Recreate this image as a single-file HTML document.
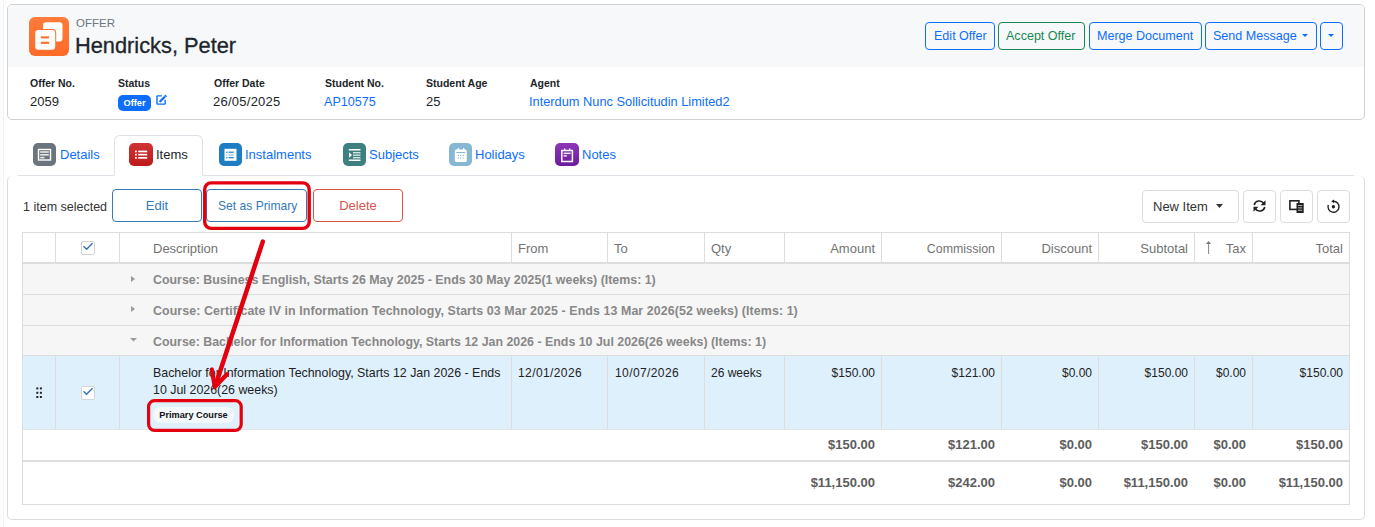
<!DOCTYPE html>
<html><head><meta charset="utf-8">
<style>
*{box-sizing:border-box;margin:0;padding:0}
html,body{width:1375px;height:527px;overflow:hidden;background:#fff;font-family:"Liberation Sans",sans-serif;color:#212529}
.a{position:absolute;white-space:nowrap}
svg{position:absolute;overflow:visible}
.edge{left:0;top:0;width:4px;height:527px;background:#fcfcfd;border-right:1px solid #f3f3f5}
#hcard{left:7px;top:4px;width:1358px;height:116px;border:1px solid #cfd1d3;border-radius:5px;overflow:hidden;background:#fff}
#htop{left:0;top:0;width:1356px;height:62px;background:#f7f8fa}
.hsub{left:76px;top:17px;font-size:11.5px;color:#6c757d}
.hname{left:75px;top:33px;font-size:21.8px;color:#212529;-webkit-text-stroke:0.3px #212529}
.btn{position:absolute;top:22px;height:28px;border:1px solid #0d6efd;border-radius:4px;color:#0d6efd;font-size:12.55px;line-height:26px;white-space:nowrap}
.lbl{position:absolute;top:77px;font-size:10.5px;font-weight:bold;color:#212529;white-space:nowrap}
.val{position:absolute;top:94px;font-size:13px;color:#212529;white-space:nowrap}
.lnk{color:#0d6efd}
.badge{position:absolute;left:118px;top:95px;width:33px;height:16px;border-radius:5px;background:#0d6efd;color:#fff;font-size:9.2px;font-weight:bold;text-align:center;line-height:16px}
.tabline{left:18px;top:175px;width:1336px;height:1px;background:#dee2e6}
.tab{position:absolute;top:135px;height:41px}
.tab.act{border:1px solid #dee2e6;border-bottom:1px solid #fff;border-radius:6px 6px 0 0;background:#fff}
.tt{position:absolute;top:147px;font-size:13px;white-space:nowrap;color:#0d6efd}
#icard{left:7px;top:176px;width:1358px;height:344px;border:1px solid #dcdcdc;border-top-width:0;border-radius:5px}
.tb{position:absolute;top:189px;height:33px;border:1px solid #337ab7;border-radius:4px;color:#337ab7;font-size:13px;line-height:31px;background:#fff;white-space:nowrap}
.gb{position:absolute;top:190px;height:33px;border:1px solid #ddd;border-radius:4px;background:#fff}
#tbl{left:22px;top:232px;width:1328px;height:273px;border:1px solid #ddd}
.vl{position:absolute;width:1px;background:#ddd}
.hl{position:absolute;left:23px;width:1326px;height:1px;background:#ddd}
.th{position:absolute;top:241px;font-size:13px;color:#737373;white-space:nowrap}
.gr{position:absolute;left:23px;width:1326px;background:#f6f6f6}
.gt{position:absolute;left:153px;font-size:12.4px;font-weight:bold;color:#888;white-space:nowrap;margin-top:1px}
.td{position:absolute;top:366px;font-size:12px;color:#222;white-space:nowrap}
.tr{text-align:right}
.sm{position:absolute;font-size:13px;font-weight:bold;color:#5c5c5c;white-space:nowrap;text-align:right}
</style></head><body>
<div class="a edge"></div>
<div id="hcard" class="a"><div id="htop" class="a"></div></div>
<svg style="left:29px;top:17px" width="40" height="39" viewBox="0 0 40 39">
<defs><linearGradient id="og" x1="0" y1="0" x2="0" y2="1"><stop offset="0" stop-color="#ff7b3c"/><stop offset="1" stop-color="#ff6a28"/></linearGradient></defs>
<rect x="0" y="0" width="40" height="39" rx="6" fill="url(#og)"/>
<rect x="14" y="5.3" width="19.5" height="19.2" rx="3" fill="#fff"/>
<rect x="5.2" y="12.1" width="22" height="21.7" rx="4" fill="#ff7132"/>
<rect x="6.2" y="13.1" width="20" height="19.7" rx="3" fill="#fff"/>
<rect x="11.8" y="19.3" width="8.3" height="2.1" fill="#ff6f30"/>
<rect x="11.8" y="24.7" width="8.3" height="2.2" fill="#ff6f30"/>
</svg>
<div class="a hsub">OFFER</div>
<div class="a hname">Hendricks, Peter</div>
<div class="btn" style="left:925px;width:70px;padding-left:8px">Edit Offer</div>
<div class="btn" style="left:998px;width:87px;padding-left:7px;border-color:#198754;color:#198754">Accept Offer</div>
<div class="btn" style="left:1089px;width:113px;padding-left:7px">Merge Document</div>
<div class="btn" style="left:1205px;width:112px;padding-left:7px">Send Message</div>
<svg style="left:1302px;top:34px" width="6" height="3" viewBox="0 0 6 3"><path d="M0 0H6L3 3Z" fill="#0d6efd"/></svg>
<div class="btn" style="left:1320px;width:23px"></div>
<svg style="left:1328px;top:34px" width="6" height="3" viewBox="0 0 6 3"><path d="M0 0H6L3 3Z" fill="#0d6efd"/></svg>
<div class="lbl" style="left:30px">Offer No.</div>
<div class="val" style="left:30px">2059</div>
<div class="lbl" style="left:214px">Offer Date</div>
<div class="val" style="left:213px;letter-spacing:0.25px">26/05/2025</div>
<div class="lbl" style="left:325px">Student No.</div>
<div class="val lnk" style="left:324px;top:95px;font-size:12.6px">AP10575</div>
<div class="lbl" style="left:426px">Student Age</div>
<div class="val" style="left:426px">25</div>
<div class="lbl" style="left:530px">Agent</div>
<div class="val lnk" style="left:529px;font-size:12.8px">Interdum Nunc Sollicitudin Limited2</div>
<div class="lbl" style="left:118px">Status</div>
<div class="badge">Offer</div>
<svg style="left:156px;top:94px" width="11" height="11" viewBox="0 0 11 11">
<path d="M5.9 1.9H1.5Q1 1.9 1 2.4V9.6Q1 10.1 1.5 10.1H8.7Q9.2 10.1 9.2 9.6V5.8" fill="none" stroke="#0d6efd" stroke-width="1.4"/>
<path d="M4.3 7.2L8.3 3.2" fill="none" stroke="#0d6efd" stroke-width="2.3" stroke-linecap="round"/>
<path d="M9.1 2.4L10.2 1.3" fill="none" stroke="#0d6efd" stroke-width="2.4"/>
</svg>
<div class="a tabline"></div>
<div class="tab act" style="left:114px;width:89px"></div>
<svg style="left:33px;top:143px" width="23" height="23" viewBox="0 0 23 23">
<rect width="23" height="23" rx="5" fill="#6c757d"/>
<rect x="5.5" y="6.5" width="12" height="10.5" fill="none" stroke="#fff" stroke-width="1.4"/>
<rect x="7.2" y="8.2" width="8.6" height="1.6" fill="#e6e8ea"/>
<rect x="7.2" y="11" width="8.6" height="1.6" fill="#e6e8ea"/>
<rect x="7.2" y="13.8" width="4.2" height="1.6" fill="#e6e8ea"/>
</svg>
<div class="tt" style="left:60px">Details</div>
<svg style="left:129px;top:143px" width="24" height="23" viewBox="0 0 24 23">
<defs><linearGradient id="rg" x1="0" y1="0" x2="0" y2="1"><stop offset="0" stop-color="#cf3535"/><stop offset="1" stop-color="#bd1a1a"/></linearGradient></defs>
<rect width="24" height="23" rx="5" fill="url(#rg)"/>
<rect x="6" y="7.6" width="1.8" height="1.7" fill="#fff"/><rect x="9.2" y="7.6" width="9" height="1.7" fill="#fff"/>
<rect x="6" y="10.8" width="1.8" height="1.7" fill="#fff"/><rect x="9.2" y="10.8" width="9" height="1.7" fill="#fff"/>
<rect x="6" y="14" width="1.8" height="1.7" fill="#fff"/><rect x="9.2" y="14" width="9" height="1.7" fill="#fff"/>
</svg>
<div class="tt" style="left:156px;color:#212529">Items</div>
<svg style="left:219px;top:143px" width="23" height="23" viewBox="0 0 23 23">
<rect width="23" height="23" rx="5" fill="#1f7dc2"/>
<rect x="5.5" y="5.8" width="12" height="12" fill="#fff"/>
<circle cx="7.9" cy="9.3" r="0.8" fill="#1f7dc2"/><rect x="9.6" y="8.6" width="5.2" height="1.2" fill="#1f7dc2"/>
<circle cx="7.9" cy="12" r="0.8" fill="#8fbfe3"/><rect x="9.6" y="11.4" width="5.2" height="1.2" fill="#8fbfe3"/>
<circle cx="7.9" cy="14.7" r="0.8" fill="#1f7dc2"/><rect x="9.6" y="14.1" width="5.2" height="1.2" fill="#1f7dc2"/>
</svg>
<div class="tt" style="left:245px">Instalments</div>
<svg style="left:343px;top:143px" width="23" height="23" viewBox="0 0 23 23">
<rect width="23" height="23" rx="5" fill="#3e7f80"/>
<rect x="5.8" y="6" width="11.7" height="1.5" fill="#fff"/>
<rect x="10" y="9" width="7.5" height="1.4" fill="#d5e4e4"/>
<rect x="10" y="11.5" width="7.5" height="1.4" fill="#d5e4e4"/>
<rect x="10" y="14" width="7.5" height="1.4" fill="#d5e4e4"/>
<rect x="5.8" y="16.5" width="11.7" height="1.5" fill="#fff"/>
<path d="M6 9.2L9 12L6 14.8Z" fill="#fff"/>
</svg>
<div class="tt" style="left:369px">Subjects</div>
<svg style="left:449px;top:143px" width="23" height="23" viewBox="0 0 23 23">
<rect width="23" height="23" rx="5" fill="#86b8d3"/>
<rect x="5.8" y="6.4" width="12" height="12.5" rx="1.5" fill="#fff"/>
<rect x="8.6" y="5" width="1.3" height="2.5" fill="#fff"/><rect x="14" y="5" width="1.3" height="2.5" fill="#fff"/>
<rect x="7.3" y="9" width="9" height="1" fill="#86b8d3"/>
<g fill="#5fa3c8"><circle cx="9.4" cy="12.3" r="0.6"/><circle cx="11.8" cy="12.3" r="0.6"/><circle cx="14.2" cy="12.3" r="0.6"/><circle cx="9.4" cy="15" r="0.6"/><circle cx="11.8" cy="15" r="0.6"/><circle cx="14.2" cy="15" r="0.6"/></g>
</svg>
<div class="tt" style="left:475px">Holidays</div>
<svg style="left:555px;top:143px" width="24" height="23" viewBox="0 0 24 23">
<defs><linearGradient id="pg" x1="0" y1="0" x2="0" y2="1"><stop offset="0" stop-color="#8c37b8"/><stop offset="1" stop-color="#6d1b9d"/></linearGradient></defs>
<rect width="24" height="23" rx="5" fill="url(#pg)"/>
<rect x="6.8" y="7.5" width="10.6" height="11" fill="none" stroke="#fff" stroke-width="1.5"/>
<rect x="9" y="5.5" width="1.3" height="2.5" fill="#fff"/><rect x="14" y="5.5" width="1.3" height="2.5" fill="#fff"/>
<rect x="8.6" y="9.6" width="7" height="1.5" fill="#f4eaf8"/>
<rect x="8.6" y="12.2" width="3.3" height="1.4" fill="#f4eaf8"/>
</svg>
<div class="tt" style="left:582px">Notes</div>
<div id="icard" class="a"></div>
<div class="a" style="left:23px;top:200px;font-size:12.5px;color:#333">1 item selected</div>
<div class="tb" style="left:112px;width:90px;text-align:center">Edit</div>
<div class="tb" style="left:206px;width:101px;padding-left:11px;font-size:12.1px;line-height:32px">Set as Primary</div>
<div class="tb" style="left:313px;width:90px;text-align:center;border-color:#d9534f;color:#d9534f">Delete</div>
<div class="gb" style="left:1142px;width:97px"></div>
<div class="a" style="left:1153px;top:199px;font-size:13px;color:#333">New Item</div>
<svg style="left:1216px;top:204px" width="7" height="4" viewBox="0 0 7 4"><path d="M0 0H7L3.5 4Z" fill="#333"/></svg>
<div class="gb" style="left:1243px;width:33px"></div>
<div class="gb" style="left:1280px;width:33px"></div>
<div class="gb" style="left:1317px;width:33px"></div>
<svg style="left:1253px;top:200px" width="13" height="12" viewBox="0 0 13 12">
<path d="M1.2 5A5.2 5.2 0 0 1 10.6 3.3" fill="none" stroke="#222" stroke-width="1.6"/>
<path d="M12.5 0.3V5.3H7.5Z" fill="#222"/>
<path d="M11.8 7A5.2 5.2 0 0 1 2.4 8.7" fill="none" stroke="#222" stroke-width="1.6"/>
<path d="M0.5 11.7V6.7H5.5Z" fill="#222"/>
</svg>
<svg style="left:1289px;top:200px" width="15" height="13" viewBox="0 0 15 13">
<rect x="0.9" y="0.8" width="9" height="8.6" fill="none" stroke="#222" stroke-width="1.6"/>
<rect x="7.5" y="3" width="7.2" height="10" fill="#222"/>
<rect x="9" y="5.2" width="4.2" height="0.8" fill="#d8d8d8"/><rect x="9" y="7.5" width="4.2" height="0.8" fill="#d8d8d8"/><rect x="9" y="9.8" width="4.2" height="0.8" fill="#d8d8d8"/>
</svg>
<svg style="left:1327px;top:200px" width="13" height="13" viewBox="0 0 13 13">
<path d="M6.4 1.3A5.5 5.5 0 1 1 1.3 5" fill="none" stroke="#222" stroke-width="1.4"/>
<path d="M4.2 1.3L7 -0.6V3.2Z" fill="#222"/>
<circle cx="6.4" cy="6.7" r="1.7" fill="#222"/>
</svg>
<div id="tbl" class="a"></div>
<div class="vl" style="left:55px;top:233px;height:29px"></div>
<div class="vl" style="left:119px;top:233px;height:29px"></div>
<div class="vl" style="left:511px;top:233px;height:29px"></div>
<div class="vl" style="left:607px;top:233px;height:29px"></div>
<div class="vl" style="left:704px;top:233px;height:29px"></div>
<div class="vl" style="left:784px;top:233px;height:29px"></div>
<div class="vl" style="left:881px;top:233px;height:29px"></div>
<div class="vl" style="left:1001px;top:233px;height:29px"></div>
<div class="vl" style="left:1098px;top:233px;height:29px"></div>
<div class="vl" style="left:1194px;top:233px;height:29px"></div>
<div class="vl" style="left:1252px;top:233px;height:29px"></div>
<div class="hl" style="top:262px;height:2px"></div>
<div class="gr" style="top:264px;height:30px"></div>
<div class="hl" style="top:294px"></div>
<div class="gr" style="top:295px;height:30px"></div>
<div class="hl" style="top:325px"></div>
<div class="gr" style="top:326px;height:29px"></div>
<div class="hl" style="top:355px"></div>
<div class="a" style="left:23px;top:356px;width:1326px;height:73px;background:#dff0fd"></div>
<div class="vl" style="left:55px;top:356px;height:73px"></div>
<div class="vl" style="left:119px;top:356px;height:73px"></div>
<div class="vl" style="left:511px;top:356px;height:73px"></div>
<div class="vl" style="left:607px;top:356px;height:73px"></div>
<div class="vl" style="left:704px;top:356px;height:73px"></div>
<div class="vl" style="left:784px;top:356px;height:73px"></div>
<div class="vl" style="left:881px;top:356px;height:73px"></div>
<div class="vl" style="left:1001px;top:356px;height:73px"></div>
<div class="vl" style="left:1098px;top:356px;height:73px"></div>
<div class="vl" style="left:1194px;top:356px;height:73px"></div>
<div class="vl" style="left:1252px;top:356px;height:73px"></div>
<div class="hl" style="top:429px;background:#e2e4e6"></div>
<div class="hl" style="top:460px;height:2px"></div>
<svg style="left:81px;top:241px" width="14" height="14" viewBox="0 0 14 14">
<rect x="0.5" y="0.5" width="13" height="13" rx="1.5" fill="#fff" stroke="#d4d4d4"/>
<path d="M2.5 5.2L5.6 8.2L11.5 2.3" fill="none" stroke="#2f74bb" stroke-width="1.35"/>
</svg>
<svg style="left:81px;top:386px" width="14" height="14" viewBox="0 0 14 14">
<rect x="0.5" y="0.5" width="13" height="13" rx="1.5" fill="#fff" stroke="#d4d4d4"/>
<path d="M2.5 5.2L5.6 8.2L11.5 2.3" fill="none" stroke="#2f74bb" stroke-width="1.35"/>
</svg>
<div class="th" style="left:153px">Description</div>
<div class="th" style="left:518px">From</div>
<div class="th" style="left:614px">To</div>
<div class="th" style="left:711px">Qty</div>
<div class="th tr" style="right:500px">Amount</div>
<div class="th tr" style="right:380px;font-size:12.4px;margin-top:0.5px">Commission</div>
<div class="th tr" style="right:283px">Discount</div>
<div class="th tr" style="right:187px">Subtotal</div>
<div class="th tr" style="right:129px">Tax</div>
<div class="th tr" style="right:32px">Total</div>
<svg style="left:1205.5px;top:241px" width="5" height="13" viewBox="0 0 5 13"><path d="M2.5 0L5 3H0Z" fill="#777"/><rect x="2.1" y="2.5" width="1" height="10.5" fill="#888"/></svg>
<div class="gt" style="top:272px">Course: Business English, Starts 26 May 2025 - Ends 30 May 2025(1 weeks) (Items: 1)</div>
<div class="gt" style="top:303px;letter-spacing:0.09px">Course: Certificate IV in Information Technology, Starts 03 Mar 2025 - Ends 13 Mar 2026(52 weeks) (Items: 1)</div>
<div class="gt" style="top:334px">Course: Bachelor for Information Technology, Starts 12 Jan 2026 - Ends 10 Jul 2026(26 weeks) (Items: 1)</div>
<svg style="left:131px;top:276px" width="4" height="6" viewBox="0 0 4 6"><path d="M0 0L4 3L0 6Z" fill="#999"/></svg>
<svg style="left:131px;top:306px" width="4" height="6" viewBox="0 0 4 6"><path d="M0 0L4 3L0 6Z" fill="#999"/></svg>
<svg style="left:130px;top:338px" width="7" height="3.5" viewBox="0 0 7 3.5"><path d="M0 0H7L3.5 3.5Z" fill="#999"/></svg>
<svg style="left:36px;top:387px" width="6" height="11" viewBox="0 0 6 11"><g fill="#222"><rect x="0.3" y="0.4" width="2" height="2"/><rect x="3.9" y="0.4" width="2" height="2"/><rect x="0.3" y="4.8" width="2" height="2"/><rect x="3.9" y="4.8" width="2" height="2"/><rect x="0.3" y="9" width="2" height="2"/><rect x="3.9" y="9" width="2" height="2"/></g></svg>
<div class="td" style="left:153px;top:365px;line-height:16.5px;font-size:12.4px">Bachelor for Information Technology, Starts 12 Jan 2026 - Ends<br>10 Jul 2026(26 weeks)</div>
<div class="a" style="left:153px;top:407px;width:81px;height:16px;border-radius:8px;background:#f3f8fc;font-size:9.2px;font-weight:bold;color:#111;text-align:center;line-height:16px">Primary Course</div>
<div class="td" style="left:518px;letter-spacing:0.4px">12/01/2026</div>
<div class="td" style="left:615px;letter-spacing:0.4px">10/07/2026</div>
<div class="td" style="left:711px">26 weeks</div>
<div class="td tr" style="right:500px">$150.00</div>
<div class="td tr" style="right:380px">$121.00</div>
<div class="td tr" style="right:283px">$0.00</div>
<div class="td tr" style="right:187px">$150.00</div>
<div class="td tr" style="right:129px">$0.00</div>
<div class="td tr" style="right:32px">$150.00</div>
<div class="sm" style="top:437px;right:500px">$150.00</div>
<div class="sm" style="top:437px;right:380px">$121.00</div>
<div class="sm" style="top:437px;right:283px">$0.00</div>
<div class="sm" style="top:437px;right:187px">$150.00</div>
<div class="sm" style="top:437px;right:129px">$0.00</div>
<div class="sm" style="top:437px;right:32px">$150.00</div>
<div class="sm" style="top:475px;right:500px">$11,150.00</div>
<div class="sm" style="top:475px;right:380px">$242.00</div>
<div class="sm" style="top:475px;right:283px">$0.00</div>
<div class="sm" style="top:475px;right:187px">$11,150.00</div>
<div class="sm" style="top:475px;right:129px">$0.00</div>
<div class="sm" style="top:475px;right:32px">$11,150.00</div>
<svg style="left:0;top:0" width="1375" height="527" viewBox="0 0 1375 527">
<rect x="204.7" y="182.9" width="104.5" height="45.5" rx="6.5" fill="none" stroke="#e3000f" stroke-width="3.4"/>
<rect x="148.6" y="400.6" width="92.6" height="29.7" rx="6" fill="none" stroke="#e3000f" stroke-width="3.2"/>
<path d="M262.8 241.6L215.6 385" fill="none" stroke="#e3000f" stroke-width="4.5" stroke-linecap="round"/>
<path d="M211.8 369.5L214.8 387L227 374.2" fill="none" stroke="#e3000f" stroke-width="4.3" stroke-linecap="round" stroke-linejoin="round"/>
</svg>
</body></html>
